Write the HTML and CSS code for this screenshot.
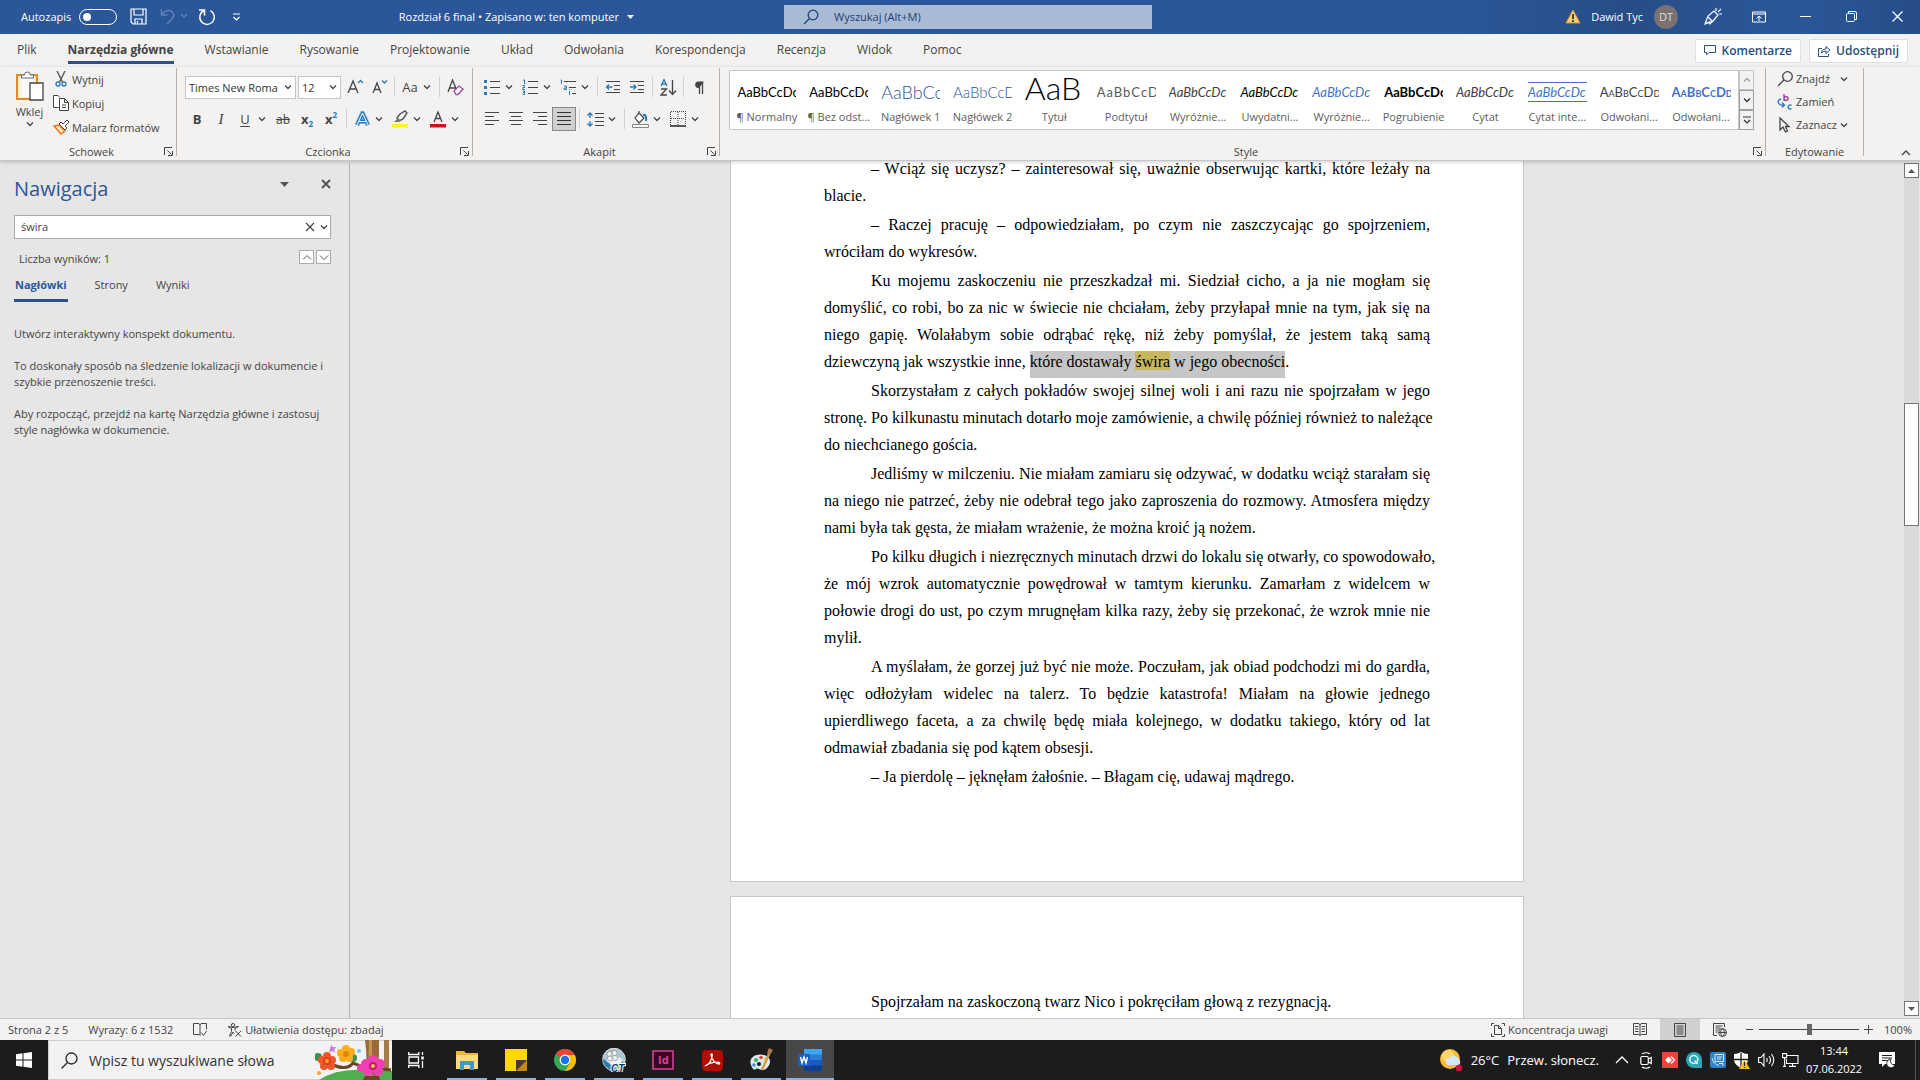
FILE: index.html
```html
<!DOCTYPE html>
<html lang="pl">
<head>
<meta charset="UTF-8">
<meta name="viewport" content="width=device-width, initial-scale=1.0">
<title>Rozdział 6 final</title>
<link rel="stylesheet" href="styles.css">
</head>
<body>
    <svg class="sprite" aria-hidden="true">
        <symbol id="chev" viewBox="0 0 8 8"><path d="M1 2.5l3 3 3-3" fill="none" stroke="currentColor" stroke-width="1.3"/></symbol>
        <symbol id="launch" viewBox="0 0 9 9"><path d="M.5 8V.5H8M3.500 3.500l4 4M8.500 4v4.500H4" fill="none" stroke="#444" stroke-width="1"/></symbol>
    </svg>

    <header class="titlebar">
        <div class="title-left">
            <label class="autosave">Autozapis <input type="checkbox" class="toggle"></label>
            <button class="tb-btn save" aria-label="Zapisz"><svg width="17" height="17" viewBox="0 0 17 17" fill="none" stroke="#fff" stroke-width="1.200"><path d="M1 1h15v15H3l-2-2zM4 1v6h9V1M5 16v-5h7v5M7.500 16v-3"/></svg></button>
            <button class="tb-btn undo" aria-label="Cofnij"><svg width="27" height="17" viewBox="0 0 27 17" fill="none" stroke="#5f82b8" stroke-width="1.500"><path d="M1.500 1v6h6M1.500 7C5 2 11 1 13 5s-1 6-6 11M21 6l3 3 3-3"/></svg></button>
            <button class="tb-btn redo" aria-label="Powtórz"><svg width="18" height="18" viewBox="0 0 18 18" fill="none" stroke="#fff" stroke-width="1.500"><path d="M1 2h5.500v5.500M6 2.500a7.300 7.300 0 1 0 6.500.2"/></svg></button>
            <button class="tb-btn" aria-label="Dostosuj"><svg width="9" height="8" viewBox="0 0 9 8" fill="none" stroke="#fff" stroke-width="1.200"><path d="M1 1h7M1.500 4l3 3 3-3"/></svg></button>
            <button class="doc-title">Rozdział 6 final • Zapisano w: ten komputer <svg width="7" height="4" viewBox="0 0 7 4"><path d="M0 0h7L3.500 4z" fill="#fff"/></svg></button>
        </div>
        <label class="title-search">
            <svg width="16" height="16" viewBox="0 0 16 16" fill="none" stroke="#1e3f73" stroke-width="1.300"><circle cx="10" cy="6" r="4.800"/><path d="M6.500 9.500L1 15"/></svg>
            <input type="text" placeholder="Wyszukaj (Alt+M)" aria-label="Wyszukaj">
        </label>
        <div class="title-right">
            <svg width="16" height="15" viewBox="0 0 16 15"><path d="M8 1l7 13H1z" fill="#fbd07a" stroke="#e08a2c"/><path d="M8 5v5M8 11v2" stroke="#222" stroke-width="1.600"/></svg>
            <span class="user">Dawid Tyc</span>
            <span class="avatar">DT</span>
            <button class="win-btn pen" aria-label="Pióro"><svg width="18" height="18" viewBox="0 0 18 18" fill="none" stroke="#fff" stroke-width="1.200"><path d="M1 16l3-8 6-5 4 4-5 6zM1 16l4-2 1 2 3-3M4 9l4 4M12 3V0M14 4l3-3M15 6h3"/></svg></button>
            <button class="win-btn" aria-label="Opcje wstążki"><svg width="14" height="12" viewBox="0 0 14 12" fill="none" stroke="#fff"><path d="M.5 1h13v10H.5zM.5 3h13M7 10V5M4.500 7.500L7 5l2.500 2.500"/></svg></button>
            <button class="win-btn" aria-label="Minimalizuj"><svg width="11" height="11" viewBox="0 0 11 11"><path d="M0 5.500h11" stroke="#fff"/></svg></button>
            <button class="win-btn" aria-label="Przywróć"><svg width="11" height="11" viewBox="0 0 11 11" fill="none" stroke="#fff"><rect x=".5" y="2.500" width="8" height="8" rx="1"/><path d="M2.500 2V.5H9q1.500 0 1.500 1.500v6.500H9"/></svg></button>
            <button class="win-btn" aria-label="Zamknij"><svg width="11" height="11" viewBox="0 0 11 11"><path d="M.5.5l10 10M10.500.5l-10 10" stroke="#fff" stroke-width="1.200"/></svg></button>
        </div>
    </header>

    <nav class="tabs">
        <button class="tab">Plik</button>
        <button class="tab active">Narzędzia główne</button>
        <button class="tab">Wstawianie</button>
        <button class="tab">Rysowanie</button>
        <button class="tab">Projektowanie</button>
        <button class="tab">Układ</button>
        <button class="tab">Odwołania</button>
        <button class="tab">Korespondencja</button>
        <button class="tab">Recenzja</button>
        <button class="tab">Widok</button>
        <button class="tab">Pomoc</button>
        <div class="tab-actions">
            <button class="share"><svg width="12" height="11" viewBox="0 0 12 11" fill="none" stroke="#2b4f7c"><path d="M.5.5h11v7H5L2.500 10V7.500h-2z"/></svg>Komentarze</button>
            <button class="share"><svg width="13" height="12" viewBox="0 0 13 12" fill="none" stroke="#2b4f7c"><path d="M4 3.500H.5v8h10V9M3.500 8q0-4 4.500-4V1.500l4 3.500-4 3.500V6Q5 6 3.500 8z"/></svg>Udostępnij</button>
        </div>
    </nav>

    <section class="ribbon">
        <div class="group clipboard">
            <div class="group-body paste-row">
                <button class="paste">
                    <svg width="29" height="32" viewBox="0 0 29 32" fill="none"><path d="M2 4h20v24H2z" fill="#fdf0d8" stroke="#e08a2c" stroke-width="2"/><path d="M6 6h13v20H6z" fill="#faf9f8"/><path d="M6.500 7V4h3q0-3 3-3t3 3h3v3z" fill="#fff" stroke="#666"/><path d="M15 12h13v17H15z" fill="#fff" stroke="#444" stroke-width="1.300"/></svg>
                    <span>Wklej</span>
                    <svg class="chev"><use href="#chev"/></svg>
                </button>
                <div class="stack clip-stack">
                    <button class="cmd"><svg width="16" height="16" viewBox="0 0 16 16" fill="none"><path d="M4 0l5.500 11M12 0L6.500 11" stroke="#555" stroke-width="1.400"/><circle cx="5" cy="13" r="2" stroke="#2a7ab8" stroke-width="1.300"/><circle cx="11" cy="13" r="2" stroke="#2a7ab8" stroke-width="1.300"/></svg>Wytnij</button>
                    <button class="cmd"><svg width="16" height="16" viewBox="0 0 16 16" fill="#fff" stroke="#444"><path d="M5.500 12.500h-5V.5H5l2 2"/><path d="M6.500 3.500h5l4 4v8h-9zM11.500 3.500v4h4M9 10h4M9 12.500h4"/></svg>Kopiuj</button>
                    <button class="cmd"><svg width="16" height="16" viewBox="0 0 16 16" fill="none"><path d="M1 7l5-1 6 6-4 3z" fill="#fbe3c2" stroke="#e07b1f" stroke-width="1.500"/><path d="M6 5l2-2 2 2 4-4 2 2-4 4 2 2-2 2z" fill="#fff" stroke="#444"/></svg>Malarz formatów</button>
                </div>
            </div>
            <div class="group-foot"><span>Schowek</span><button class="launch" aria-label="Schowek – opcje"><svg width="9" height="9"><use href="#launch"/></svg></button></div>
        </div>

        <div class="group font">
            <div class="group-body rows">
                <div class="row">
                    <span class="combo font-name"><select aria-label="Czcionka"><option>Times New Roma</option></select><svg class="chev"><use href="#chev"/></svg></span>
                    <span class="combo font-size"><select aria-label="Rozmiar"><option>12</option></select><svg class="chev"><use href="#chev"/></svg></span>
                    <button class="ic" aria-label="Większa czcionka"><svg width="17" height="16" viewBox="0 0 17 16" fill="none" stroke="#444" stroke-width="1.300"><path d="M1 14L6 2l5 12M3 10h6"/><path d="M11 4l2.500-2.500L16 4" stroke="#2a7ab8"/></svg></button>
                    <button class="ic" aria-label="Mniejsza czcionka"><svg width="17" height="16" viewBox="0 0 17 16" fill="none" stroke="#444" stroke-width="1.300"><path d="M2 14L6 4l4 10M3.500 10.500h5"/><path d="M11 1.500L13.500 4 16 1.500" stroke="#2a7ab8"/></svg></button>
                    <i class="sep"></i>
                    <button class="ic case" aria-label="Wielkość liter">Aa</button><button class="dd" aria-label="Więcej"><svg class="chev"><use href="#chev"/></svg></button>
                    <i class="sep"></i>
                    <button class="ic" aria-label="Wyczyść formatowanie"><svg width="17" height="17" viewBox="0 0 17 17" fill="none" stroke="#444" stroke-width="1.300"><path d="M1 13L5.500 1 10 12M2.500 9h6"/><path d="M7 12l5-5 4 3-5 5.500H9z" fill="#fff" stroke="#9b45a5"/></svg></button>
                </div>
                <div class="row">
                    <button class="ic bold" aria-label="Pogrubienie">B</button>
                    <button class="ic italic" aria-label="Kursywa">I</button>
                    <button class="ic underline" aria-label="Podkreślenie">U</button><button class="dd" aria-label="Więcej"><svg class="chev"><use href="#chev"/></svg></button>
                    <button class="ic strike" aria-label="Przekreślenie">ab</button>
                    <button class="ic script" aria-label="Indeks dolny">x<sub>2</sub></button>
                    <button class="ic script" aria-label="Indeks górny">x<sup>2</sup></button>
                    <i class="sep"></i>
                    <button class="ic" aria-label="Efekty tekstu"><svg width="17" height="16" viewBox="0 0 17 16" fill="none" stroke-linejoin="round"><path d="M3 14L8.500 2 14 14M5 10.500h7" stroke="#8fc3ea" stroke-width="5"/><path d="M3 14L8.500 2 14 14M5 10.500h7" stroke="#2a7ab8" stroke-width="3.400"/><path d="M3 14L8.500 2 14 14M5 10.500h7" stroke="#fff" stroke-width="1"/></svg></button><button class="dd" aria-label="Więcej"><svg class="chev"><use href="#chev"/></svg></button>
                    <button class="ic" aria-label="Wyróżnienie"><svg width="18" height="18" viewBox="0 0 18 18" fill="none"><path d="M1 14h16v3.500H1z" fill="#fbf22c"/><path d="M6 8l3-4 5-3 2 2-4 6-4 2z" stroke="#555" stroke-width="1.400"/><path d="M3 12l4-4 3 3-3 1z" fill="#777"/></svg></button><button class="dd" aria-label="Więcej"><svg class="chev"><use href="#chev"/></svg></button>
                    <button class="ic" aria-label="Kolor czcionki"><svg width="18" height="18" viewBox="0 0 18 18" fill="none"><path d="M1 14h16v3.500H1z" fill="#c8141c"/><path d="M5 12L9 2l4 10M6.500 8.500h5" stroke="#444" stroke-width="1.300"/></svg></button><button class="dd" aria-label="Więcej"><svg class="chev"><use href="#chev"/></svg></button>
                </div>
            </div>
            <div class="group-foot"><span>Czcionka</span><button class="launch" aria-label="Czcionka – opcje"><svg width="9" height="9"><use href="#launch"/></svg></button></div>
        </div>

        <div class="group para">
            <div class="group-body rows">
                <div class="row">
                    <button class="ic" aria-label="Punktory"><svg width="16" height="16" viewBox="0 0 16 16"><path d="M0 1h3v3H0zM0 7h3v3H0zM0 13h3v3H0z" fill="#2a7ab8"/><path d="M6 2.500h10M6 8.500h10M6 14.500h10" stroke="#444"/></svg></button><button class="dd" aria-label="Więcej"><svg class="chev"><use href="#chev"/></svg></button>
                    <button class="ic" aria-label="Numerowanie"><svg width="16" height="16" viewBox="0 0 16 16" fill="none"><path d="M1 1h1.500v4M.5 6.500h2v2H.8v2h2M.5 12h2v3.500h-2M1 13.500h1.500" stroke="#2a7ab8"/><path d="M6 2.500h10M6 8.500h10M6 14.500h10" stroke="#444"/></svg></button><button class="dd" aria-label="Więcej"><svg class="chev"><use href="#chev"/></svg></button>
                    <button class="ic" aria-label="Lista wielopoziomowa"><svg width="16" height="16" viewBox="0 0 16 16" fill="none"><path d="M.5 1h1v4M4 7h2.500v3.500H4V9h2M9.500 12v4M9.500 10v1" stroke="#2a7ab8"/><path d="M4 2.500h12M9 8.500h7M12 14.500h4" stroke="#444"/></svg></button><button class="dd" aria-label="Więcej"><svg class="chev"><use href="#chev"/></svg></button>
                    <i class="sep"></i>
                    <button class="ic" aria-label="Zmniejsz wcięcie"><svg width="16" height="14" viewBox="0 0 16 14" fill="none"><path d="M1 1.500h14M9 5.500h6M9 9.500h6M1 12.500h14" stroke="#444"/><path d="M7.500 7h-6M4 4.500L1.500 7 4 9.500" stroke="#2a7ab8" stroke-width="1.300"/></svg></button>
                    <button class="ic" aria-label="Zwiększ wcięcie"><svg width="16" height="14" viewBox="0 0 16 14" fill="none"><path d="M1 1.500h14M9 5.500h6M9 9.500h6M1 12.500h14" stroke="#444"/><path d="M1 7h6M4.500 4.500L7 7 4.500 9.500" stroke="#2a7ab8" stroke-width="1.300"/></svg></button>
                    <i class="sep"></i>
                    <button class="ic" aria-label="Sortuj"><svg width="17" height="17" viewBox="0 0 17 17" fill="none" stroke-width="1.300"><path d="M1 7l3-6.500L7 7M2 5h4" stroke="#2a7ab8"/><path d="M1 10h5.500L1 16h6M12.500 1v14M9 11.500l3.500 4 3.500-4" stroke="#444"/></svg></button>
                    <i class="sep"></i>
                    <button class="ic" aria-label="Znaki formatowania"><svg width="10" height="13" viewBox="0 0 10 13"><path d="M10 .5H4.500a3.300 3.300 0 0 0 0 6.600H5" fill="#444"/><path d="M5.500 1v12M8.500 1v12" stroke="#444" stroke-width="1.300"/></svg></button>
                </div>
                <div class="row">
                    <button class="ic" aria-label="Do lewej"><svg width="14" height="14" viewBox="0 0 14 14"><path d="M0 .5h14M0 4.500h9M0 8.500h14M0 12.500h9" stroke="#444"/></svg></button>
                    <button class="ic" aria-label="Do środka"><svg width="14" height="14" viewBox="0 0 14 14"><path d="M0 .5h14M2 4.500h10M0 8.500h14M2 12.500h10" stroke="#444"/></svg></button>
                    <button class="ic" aria-label="Do prawej"><svg width="14" height="14" viewBox="0 0 14 14"><path d="M0 .5h14M5 4.500h9M0 8.500h14M5 12.500h9" stroke="#444"/></svg></button>
                    <button class="ic on" aria-label="Wyjustuj"><svg width="14" height="14" viewBox="0 0 14 14"><path d="M0 .5h14M0 4.500h14M0 8.500h14M0 12.500h14" stroke="#333"/></svg></button>
                    <i class="sep"></i>
                    <button class="ic" aria-label="Interlinia"><svg width="17" height="15" viewBox="0 0 17 15" fill="none"><path d="M8 1.500h9M8 5.500h9M8 9.500h9M8 13.500h9" stroke="#444"/><path d="M3 1v5M3 14V9M.5 3.500L3 1l2.500 2.500M.5 11.500L3 14l2.500-2.500" stroke="#2a7ab8" stroke-width="1.300"/></svg></button><button class="dd" aria-label="Więcej"><svg class="chev"><use href="#chev"/></svg></button>
                    <i class="sep"></i>
                    <button class="ic" aria-label="Cieniowanie"><svg width="17" height="17" viewBox="0 0 17 17" fill="none"><path d="M.5 13.500h16v3H.5z" fill="#fff" stroke="#888"/><path d="M7 2l5 5-5 5-4-5zM7 2V0" fill="#fff" stroke="#444" stroke-width="1.200"/><path d="M11 4q4-1 3 6" stroke="#2a7ab8" stroke-width="2"/></svg></button><button class="dd" aria-label="Więcej"><svg class="chev"><use href="#chev"/></svg></button>
                    <button class="ic" aria-label="Obramowanie"><svg width="16" height="16" viewBox="0 0 16 16" fill="none" stroke="#444"><path d="M.5 14V.5h15V14M8 1v14M1 7.500h14" stroke-dasharray="1 1"/><path d="M0 15h16" stroke="#222" stroke-width="1.500"/></svg></button><button class="dd" aria-label="Więcej"><svg class="chev"><use href="#chev"/></svg></button>
                </div>
            </div>
            <div class="group-foot"><span>Akapit</span><button class="launch" aria-label="Akapit – opcje"><svg width="9" height="9"><use href="#launch"/></svg></button></div>
        </div>

        <div class="group style-group">
            <div class="group-body gallery-wrap">
                <div class="gallery">
                    <button class="style"><span class="preview">AaBbCcDc</span><span>¶ Normalny</span></button>
                    <button class="style"><span class="preview">AaBbCcDc</span><span>¶ Bez odst...</span></button>
                    <button class="style"><span class="preview h1">AaBbCc</span><span>Nagłówek 1</span></button>
                    <button class="style"><span class="preview h2">AaBbCcD</span><span>Nagłówek 2</span></button>
                    <button class="style"><span class="preview big">AaB</span><span>Tytuł</span></button>
                    <button class="style"><span class="preview sub">AaBbCcD</span><span>Podtytuł</span></button>
                    <button class="style"><span class="preview em grey">AaBbCcDc</span><span>Wyróżnie...</span></button>
                    <button class="style"><span class="preview em">AaBbCcDc</span><span>Uwydatni...</span></button>
                    <button class="style"><span class="preview em blue">AaBbCcDc</span><span>Wyróżnie...</span></button>
                    <button class="style"><span class="preview strong">AaBbCcDc</span><span>Pogrubienie</span></button>
                    <button class="style"><span class="preview em grey">AaBbCcDc</span><span>Cytat</span></button>
                    <button class="style"><span class="preview em blue lined">AaBbCcDc</span><span>Cytat inte...</span></button>
                    <button class="style"><span class="preview caps">AaBbCcDd</span><span>Odwołani...</span></button>
                    <button class="style"><span class="preview caps blue strong">AaBbCcDd</span><span>Odwołani...</span></button>
                </div>
                <div class="gallery-scroll">
                    <button disabled aria-label="W górę"><svg class="chev up"><use href="#chev"/></svg></button>
                    <button aria-label="W dół"><svg class="chev"><use href="#chev"/></svg></button>
                    <button aria-label="Więcej stylów"><svg width="8" height="8" viewBox="0 0 8 8" fill="none" stroke="#333" stroke-width="1.200"><path d="M0 1h8M1 4l3 3 3-3"/></svg></button>
                </div>
            </div>
            <div class="group-foot"><span>Style</span><button class="launch" aria-label="Style – opcje"><svg width="9" height="9"><use href="#launch"/></svg></button></div>
        </div>

        <div class="group edit">
            <div class="group-body stack edit-stack">
                <button class="cmd"><svg width="16" height="16" viewBox="0 0 16 16" fill="none" stroke="#444" stroke-width="1.300"><circle cx="10.500" cy="5.500" r="4.800"/><path d="M7 9l-6 6"/></svg><span>Znajdź</span><svg class="chev"><use href="#chev"/></svg></button>
                <button class="cmd"><svg width="16" height="16" viewBox="0 0 16 16" fill="none" stroke-width="1.400"><path d="M7 0v7M7 4.500a2 2 0 1 1 4 0a2 2 0 1 1-4 0" stroke="#9b45a5"/><path d="M4 5Q0 6 1.500 9T7 11M5 8.500L7.500 11 5 13.500M14.500 11.500a2 2 0 1 0 0 3" stroke="#2a7ab8"/></svg><span>Zamień</span></button>
                <button class="cmd"><svg width="16" height="16" viewBox="0 0 16 16" fill="none" stroke="#444" stroke-width="1.300"><path d="M3 1v12l3-3 2.500 5 2-1L8.500 9.500H12z"/></svg><span>Zaznacz</span><svg class="chev"><use href="#chev"/></svg></button>
            </div>
            <div class="group-foot"><span>Edytowanie</span></div>
        </div>
        <button class="collapse" aria-label="Zwiń wstążkę"><svg width="10" height="6" viewBox="0 0 10 6"><path d="M1 5l4-4 4 4" fill="none" stroke="#444" stroke-width="1.300"/></svg></button>
    </section>

    <div class="workspace">
        <aside class="nav-pane">
            <div class="nav-head">
                <h1>Nawigacja</h1>
                <button aria-label="Opcje okienka"><svg width="9" height="5" viewBox="0 0 9 5"><path d="M0 0h9L4.500 5z" fill="#555"/></svg></button>
                <button aria-label="Zamknij okienko"><svg width="10" height="10" viewBox="0 0 10 10"><path d="M1 1l8 8M9 1L1 9" stroke="#555" stroke-width="2"/></svg></button>
            </div>
            <div class="nav-search">
                <input type="text" value="świra" aria-label="Wyszukaj w dokumencie">
                <button aria-label="Wyczyść"><svg width="10" height="10" viewBox="0 0 10 10"><path d="M1 1l8 8M9 1L1 9" stroke="#444" stroke-width="1.200"/></svg></button>
                <button aria-label="Opcje wyszukiwania"><svg class="chev"><use href="#chev"/></svg></button>
            </div>
            <div class="results">
                <span>Liczba wyników: 1</span>
                <button aria-label="Poprzedni"><svg width="10" height="7" viewBox="0 0 10 7"><path d="M1 5.500l4-4 4 4" fill="none" stroke="#555"/></svg></button>
                <button aria-label="Następny"><svg width="10" height="7" viewBox="0 0 10 7"><path d="M1 1.500l4 4 4-4" fill="none" stroke="#555"/></svg></button>
            </div>
            <div class="nav-tabs">
                <button class="active">Nagłówki</button>
                <button>Strony</button>
                <button>Wyniki</button>
            </div>
            <div class="nav-help">
                <p>Utwórz interaktywny konspekt dokumentu.</p>
                <p>To doskonały sposób na śledzenie lokalizacji w dokumencie i<br>szybkie przenoszenie treści.</p>
                <p>Aby rozpocząć, przejdź na kartę Narzędzia główne i zastosuj<br>style nagłówka w dokumencie.</p>
            </div>
        </aside>

        <main class="canvas">
            <article class="page first">
                <p>– Wciąż się uczysz? – zainteresował się, uważnie obserwując kartki, które leżały na blacie.</p>
                <p>– Raczej pracuję – odpowiedziałam, po czym nie zaszczycając go spojrzeniem, wróciłam do wykresów.</p>
                <p>Ku mojemu zaskoczeniu nie przeszkadzał mi. Siedział cicho, a ja nie mogłam się domyślić, co robi, bo za nic w świecie nie chciałam, żeby przyłapał mnie na tym, jak się na niego gapię. Wolałabym sobie odrąbać rękę, niż żeby pomyślał, że jestem taką samą dziewczyną jak wszystkie inne, <span class="selected">które dostawały <mark>świra</mark> w jego obecności</span>.</p>
                <p>Skorzystałam z całych pokładów swojej silnej woli i ani razu nie spojrzałam w jego <span class="keep">stronę. Po kilkunastu minutach dotarło moje zamówienie, a chwilę później również to należące</span> do niechcianego gościa.</p>
                <p>Jedliśmy w milczeniu. Nie miałam zamiaru się odzywać, w dodatku wciąż starałam się na niego nie patrzeć, żeby nie odebrał tego jako zaproszenia do rozmowy. Atmosfera między nami była tak gęsta, że miałam wrażenie, że można kroić ją nożem.</p>
                <p><span class="keep">Po kilku długich i niezręcznych minutach drzwi do lokalu się otwarły, co spowodowało,</span> że mój wzrok automatycznie powędrował w tamtym kierunku. Zamarłam z widelcem w połowie drogi do ust, po czym mrugnęłam kilka razy, żeby się przekonać, że wzrok mnie nie mylił.</p>
                <p>A myślałam, że gorzej już być nie może. Poczułam, jak obiad podchodzi mi do gardła, więc odłożyłam widelec na talerz. To będzie katastrofa! Miałam na głowie jednego upierdliwego faceta, a za chwilę będę miała kolejnego, w dodatku takiego, który od lat odmawiał zbadania się pod kątem obsesji.</p>
                <p>– Ja pierdolę – jęknęłam żałośnie. – Błagam cię, udawaj mądrego.</p>
            </article>
            <article class="page">
                <p>Spojrzałam na zaskoczoną twarz Nico i pokręciłam głową z rezygnacją.</p>
            </article>
        </main>

        <div class="scrollbar">
            <button aria-label="Przewiń w górę"><svg width="7" height="4" viewBox="0 0 7 4"><path d="M0 4h7L3.500 0z" fill="#555"/></svg></button>
            <div class="track"><div class="thumb"></div></div>
            <button aria-label="Przewiń w dół"><svg width="7" height="4" viewBox="0 0 7 4"><path d="M0 0h7L3.500 4z" fill="#555"/></svg></button>
        </div>
    </div>

    <footer class="status">
        <span>Strona 2 z 5</span>
        <span>Wyrazy: 6 z 1532</span>
        <svg width="14" height="14" viewBox="0 0 14 14" fill="none" stroke="#444"><path d="M7 12.500V2L6 .5H.5v11H6L7 12.500M7 2L8 .5h5.500v6M8 9.500l2.500 3 3-4.500"/></svg>
        <button class="a11y"><svg width="15" height="14" viewBox="0 0 15 14" fill="none" stroke="#444"><circle cx="6" cy="2.200" r="1.700"/><path d="M1 3.500l3.500 2v3L2.500 13H4l2-4 1.500 1.500M11.500 3.500L8 5.500v2M8.500 8l5.500 5.500M14 8l-5.500 5.500M1 3.500q5 2 10.500 0"/></svg>Ułatwienia dostępu: zbadaj</button>
        <div class="status-right">
            <button class="focus"><svg width="14" height="14" viewBox="0 0 14 14" fill="none" stroke="#444"><path d="M3 .5H.5V3M11 .5h2.500V3M3 13.500H.5V11M11 13.500h2.500V11M3.500 2.500h4l3 3v6h-7zM7.500 2.500v3h3"/></svg>Koncentracja uwagi</button>
            <button class="view" aria-label="Tryb odczytu"><svg width="14" height="13" viewBox="0 0 14 13" fill="none" stroke="#444"><path d="M7 1v11.500M.5.5H6L7 2 8 .5h5.500v11H8L7 12.500 6 11.500H.5zM2 3.500h3.500M2 6h3.500M2 8.500h3.500M8.500 3.500H12M8.500 6H12M8.500 8.500H12"/></svg></button>
            <button class="view on" aria-label="Układ wydruku"><svg width="12" height="14" viewBox="0 0 12 14" fill="none" stroke="#444"><path d="M.5.5h11v13H.5zM2.500 3h7M2.500 5h7M2.500 7h7M2.500 9h7M2.500 11h7"/></svg></button>
            <button class="view" aria-label="Układ sieci Web"><svg width="14" height="14" viewBox="0 0 14 14" fill="none" stroke="#444"><path d="M4 12.500H.5V.5h11V4M2.500 3h7M2.500 5h5M2.500 7h3M2.500 9h2"/><circle cx="9.500" cy="9.500" r="4" fill="#f3f2f1"/><path d="M5.500 9.500h8M9.500 5.500q-4 4 0 8q4-4 0-8"/></svg></button>
            <button class="zoom-btn" aria-label="Pomniejsz"><svg width="9" height="9" viewBox="0 0 9 9"><path d="M1 4.500h7" stroke="#444"/></svg></button>
            <input type="range" class="zoom" min="0" max="100" value="51" aria-label="Powiększenie">
            <button class="zoom-btn" aria-label="Powiększ"><svg width="9" height="9" viewBox="0 0 9 9"><path d="M0 4.500h9M4.500 0v9" stroke="#444"/></svg></button>
            <span class="percent">100%</span>
        </div>
    </footer>

    <footer class="taskbar">
        <button class="start" aria-label="Start"><svg width="16" height="16" viewBox="0 0 16 16" fill="#fff"><path d="M0 2.300L6.500 1.300V7.500H0zM7.500 1.200L16 0v7.500H7.500zM0 8.500h6.500v6.200L0 13.700zM7.500 8.500H16V16l-8.500-1.200z"/></svg></button>
        <label class="task-search">
            <svg width="17" height="17" viewBox="0 0 17 17" fill="none" stroke="#222" stroke-width="1.300"><circle cx="10.500" cy="6.500" r="5.500"/><path d="M6.500 10.500L.5 16.500"/></svg>
            <input type="text" placeholder="Wpisz tu wyszukiwane słowa" aria-label="Wyszukiwanie">
            <svg class="blossom" width="77" height="40" viewBox="0 0 77 40">
                <path d="M4 40q18-12 46-10l27 1v9z" fill="#4fae4f"/>
                <path d="M50 0h14v14l-1 26H50q3-20 0-40z" fill="#9a6a38"/><path d="M54 0h3v40h-4z" fill="#c49556"/><path d="M69 0h5v31h-5z" fill="#a97a45"/>
                <path d="M18 25q14 6 20-2l10 4 28 3" fill="none" stroke="#6a4426" stroke-width="3"/>
                <circle cx="3" cy="17" r="4" fill="#3f8f52"/><circle cx="38" cy="18" r="4" fill="#3f8f52"/>
                <g fill="#f0562a"><circle cx="12" cy="16" r="4"/><circle cx="7" cy="20" r="4"/><circle cx="17" cy="20" r="4"/><circle cx="9" cy="26" r="4"/><circle cx="16" cy="26" r="4"/></g><circle cx="12" cy="21" r="4" fill="#e03e1a"/><circle cx="12" cy="21" r="2" fill="#ffb02e"/>
                <g fill="#f9ae1e"><circle cx="31" cy="9" r="4"/><circle cx="26" cy="13" r="4"/><circle cx="36" cy="12" r="4"/><circle cx="28" cy="18" r="4"/><circle cx="34" cy="18" r="4"/></g><circle cx="31" cy="14" r="3" fill="#e98408"/>
                <g fill="#f03fb4"><circle cx="58" cy="20" r="5"/><circle cx="51" cy="24" r="5"/><circle cx="65" cy="24" r="5"/><circle cx="46" cy="28" r="4"/><circle cx="53" cy="31" r="5"/><circle cx="63" cy="31" r="5"/></g><circle cx="58" cy="26" r="4" fill="#c4187c"/><circle cx="58" cy="26" r="2" fill="#ffc53a"/>
                <path d="M16 5l2 2 3 0-2 3 1 3-3-2-3 1 1-3z" fill="#c97be8"/><circle cx="44" cy="11" r="2" fill="#6fcbe0"/><circle cx="4" cy="33" r="2" fill="#f5a623"/>
                <path d="M48 40l2-4h14l1 4z" fill="#6a4426"/>
            </svg>
        </label>
        <button class="app taskview" aria-label="Widok zadań"><svg width="16" height="16" viewBox="0 0 16 16" fill="none" stroke="#fff" stroke-width="1.300"><path d="M0 2.500h11.500M0 13.500h11.500M.7 0v2.500M10.800 0v2.500M.7 16v-2.500M10.800 16v-2.500M1 5h9.500v6H1zM14.500 0v3M14.500 9v7"/><path d="M13.200 4.500h2.600v3h-2.600z" fill="#fff" stroke="none"/></svg></button>
        <button class="app" aria-label="Eksplorator plików"><svg width="22" height="19" viewBox="0 0 22 19"><path d="M0 0h8l2 2h12v16H0z" fill="#eeb63c"/><path d="M0 4h22v14H0z" fill="#fddb7e"/><path d="M4 10h14v9h-4v-5H8v5H4z" fill="#3f97d6"/></svg></button>
        <button class="app" aria-label="Karteczki"><svg width="22" height="22" viewBox="0 0 22 22"><path d="M0 0h22v22H0z" fill="#ffd80c"/><path d="M11 11h11v11H11z" fill="#c48a10"/><path d="M11 22V11h11z" fill="#4a3b28"/></svg></button>
        <button class="app" aria-label="Chrome"><svg width="22" height="22" viewBox="0 0 22 22"><circle cx="11" cy="11" r="11" fill="#34a853"/><path d="M11 11L1.500 5.500A11 11 0 0 1 20.500 5.500z" fill="#ea4335"/><path d="M11 6h9.800A11 11 0 0 1 11 22l5-8z" fill="#fbbc05"/><circle cx="11" cy="11" r="5.400" fill="#fff"/><circle cx="11" cy="11" r="4.200" fill="#1a73e8"/></svg></button>
        <button class="app" aria-label="CT"><svg width="24" height="24" viewBox="0 0 24 24"><circle cx="12" cy="11.500" r="11" fill="#a9c6d3"/><circle cx="12" cy="11.500" r="11.300" fill="none" stroke="#e6eef2"/><path d="M1 11q0 9 9 11l-3-8z" fill="#2b7fa5"/><path d="M12 6l9 6-6 8-11-7z" fill="#e9f1f4"/><path d="M4 14l9 6 8-7-2 5-6 4z" fill="#2b7fa5"/><g fill="#f2f2f2" stroke="#8a8a8a" stroke-width=".7"><circle cx="7.500" cy="6" r="2.600"/><circle cx="12.500" cy="5" r="2.600"/><circle cx="8" cy="10.500" r="2.600"/><circle cx="13" cy="10" r="2.600"/></g><text x="9" y="24" font-family="Liberation Sans" font-size="10" font-weight="700" font-style="italic" fill="#1b2b7a" stroke="#fff" stroke-width="2" paint-order="stroke">CT</text></svg></button>
        <button class="app" aria-label="InDesign"><svg width="22" height="20" viewBox="0 0 22 20"><path d="M1 1h20v18H1z" fill="#3b0620" stroke="#e0409a" stroke-width="1.500"/><text x="6" y="14" font-family="Open Sans" font-size="11" font-weight="700" fill="#e0409a">Id</text></svg></button>
        <button class="app" aria-label="Acrobat"><svg width="21" height="21" viewBox="0 0 21 21"><rect width="21" height="21" rx="4" fill="#b30b00"/><path d="M4 15.500c2 0 6-5 6.300-10.500.1-1.500-1.300-1.500-1.200 0C9.500 10 14 14 17 14c1.500-.3.500-2-2-1.800-4 .1-8 1-11 3.300z" fill="none" stroke="#fff" stroke-width="1.300"/></svg></button>
        <button class="app" aria-label="Paint"><svg width="24" height="24" viewBox="0 0 24 24"><path d="M2 17C-1 9 8 5 15 7s8 8 3 13-9-1-11 1-4-1-5-4z" fill="#dbe8f0"/><circle cx="7" cy="12" r="2" fill="#3fae5a"/><circle cx="12" cy="9.500" r="1.800" fill="#d94b3b"/><circle cx="5" cy="17" r="1.800" fill="#4a8fd6"/><circle cx="10" cy="16" r="2" fill="#1c1c1c"/><circle cx="17" cy="11" r="1.800" fill="#f0c030"/><path d="M13 22l7-16" stroke="#d99a45" stroke-width="2.400"/><path d="M18 5l2-5 4 2-3 5z" fill="#a8794e"/></svg></button>
        <button class="app current" aria-label="Word"><svg width="24" height="22" viewBox="0 0 24 22"><path d="M6 0h18v6H6z" fill="#41a5ee"/><path d="M6 5.500h18V11H6z" fill="#2b7cd3"/><path d="M6 11h18v5.500H6z" fill="#185abd"/><path d="M6 16.500h18V22H6z" fill="#103f91"/><path d="M0 5h12v12H0z" fill="#1b5cbe"/><path d="M2.500 8l1.500 6 2-6 2 6 1.500-6" fill="none" stroke="#fff" stroke-width="1.400"/></svg></button>

        <div class="tray">
            <button class="weather"><svg width="23" height="23" viewBox="0 0 23 23"><circle cx="10" cy="10" r="10" fill="#f9bd38"/><circle cx="8" cy="7" r="6" fill="#fcd86c"/><path d="M9 16a3.500 3.500 0 0 1 .5-7 5 5 0 0 1 9 1.500 3 3 0 0 1 0 5.500z" fill="#d3e8f5"/><circle cx="19" cy="19" r="3.200" fill="#d1123f"/></svg><span>26°C</span><span>Przew. słonecz.</span></button>
            <button class="tray-ic" aria-label="Ukryte ikony"><svg width="14" height="8" viewBox="0 0 14 8"><path d="M1 7l6-6 6 6" fill="none" stroke="#fff" stroke-width="1.300"/></svg></button>
            <button class="tray-ic" aria-label="Spotkanie"><svg width="12" height="17" viewBox="0 0 12 17" fill="none" stroke="#fff" stroke-width="1.200"><rect x=".8" y="4.500" width="7.500" height="8" rx="1.500"/><path d="M8.500 7l2.700-1.500v6L8.500 10M2 2q4-2.500 8 0M2 15q4 2.500 8 0"/></svg></button>
            <button class="tray-ic" aria-label="AnyDesk"><svg width="16" height="16" viewBox="0 0 16 16"><path d="M0 0h16v16H0z" fill="#ef443b"/><path d="M3 8l3.500-3.500L10 8l-3.500 3.500z" fill="#fff"/><path d="M9 4.500L12.500 8 9 11.500" fill="none" stroke="#fff" stroke-width="1.300"/></svg></button>
            <button class="tray-ic" aria-label="Q"><svg width="16" height="16" viewBox="0 0 16 16"><path d="M8 0a8 8 0 0 1 8 8v8H8A8 8 0 0 1 8 0z" fill="#2ba5b3"/><circle cx="7.800" cy="7.500" r="4" fill="none" stroke="#e8fbff" stroke-width="1.500"/><path d="M8.500 8.500l3 3.500" stroke="#e8fbff" stroke-width="1.500"/></svg></button>
            <button class="tray-ic" aria-label="Grafika"><svg width="16" height="16" viewBox="0 0 16 16" fill="none"><rect width="16" height="16" rx="2" fill="#2d83c8"/><path d="M5 2.500h8.500v7H5zM7 5h5M7 7h4M2 6q1 6 7 7.500M9 11.500h4V14" stroke="#d5ecff"/></svg></button>
            <button class="tray-ic" aria-label="Zabezpieczenia"><svg width="16" height="17" viewBox="0 0 16 17"><path d="M7 0q3 2 7 2v5q0 6-7 9Q0 13 0 7V2q4 0 7-2z" fill="#fff"/><path d="M7 1v15M0 7.500h14" stroke="#1c1c1c" stroke-width="1.300"/><path d="M10.500 7.500L16 17H5z" fill="#f7b924"/><path d="M10.500 10v4M10.500 15v1" stroke="#222"/></svg></button>
            <button class="tray-ic" aria-label="Głośność"><svg width="17" height="14" viewBox="0 0 17 14" fill="none" stroke="#fff" stroke-width="1.100"><path d="M.6 4.500H3l3-3.500v12L3 9.500H.6zM8.500 5q1.500 2 0 4M11 3q3 4 0 8M13.500 1q4.500 6 0 12"/></svg></button>
            <button class="tray-ic" aria-label="Sieć"><svg width="17" height="14" viewBox="0 0 17 14" fill="none" stroke="#fff" stroke-width="1.100"><path d="M5 2.500h11v8H4.500V6M10.500 10.500v3M7 13.400h7M.6.6h4v4h-4zM2.600 4.500v9M1 13.400h3"/></svg></button>
            <div class="clock"><span>13:44</span><span>07.06.2022</span></div>
            <button class="tray-ic notes" aria-label="Powiadomienia"><svg width="17" height="17" viewBox="0 0 17 17"><path d="M0 0h16v12H6l-3 3v-3H0z" fill="#fff"/><path d="M3 3.500h10M3 6h10M3 8.500h6" stroke="#1c1c1c"/><path d="M12 7a4.300 4.300 0 1 0 4 6 4 4 0 0 1-4-6z" fill="#fff" stroke="#1c1c1c" stroke-width=".8"/></svg></button>
            <i class="desktop-edge"></i>
        </div>
    </footer>
</body>
</html>
```
FILE: styles.css
```css
:root {
    --word-blue: #2b579a;
    --ribbon: #f3f2f1;
    --canvas: #e6e6e6;
    --text: #444444;
    --line: #c6c6c6;
    --taskbar: #1c1c1c;
}

* {
    box-sizing: border-box;
}

body {
    margin: 0;
    height: 100vh;
    display: flex;
    flex-direction: column;
    overflow: hidden;
    font-family: "Open Sans", "Noto Sans", sans-serif;
    font-size: 11px;
    color: var(--text);
    background-color: var(--canvas);
}

button,
input,
select {
    font: inherit;
    color: inherit;
    border: none;
    background: none;
    padding: 0;
    margin: 0;
    outline: none;
}

button {
    white-space: nowrap;
}

svg {
    flex: none;
    display: block;
}

.sprite {
    position: absolute;
    width: 0;
    height: 0;
}

.chev {
    width: 8px;
    height: 8px;
}

.up {
    transform: rotate(180deg);
}

/* Title bar */
.titlebar {
    flex: none;
    height: 34px;
    padding: 0 0 1px 16px;
    display: grid;
    grid-template-columns: 1fr 368px 1fr;
    align-items: center;
    color: #fff;
    background: linear-gradient(90deg, transparent 75%, #264d87 85%, #2b579a 93%, #264d87) var(--word-blue);
}

.title-left,
.title-right {
    display: flex;
    align-items: center;
    height: 32px;
}

.autosave {
    display: flex;
    align-items: center;
    gap: 8px;
    padding-left: 5px;
    margin-right: 13px;
}

.toggle {
    appearance: none;
    width: 38px;
    height: 16px;
    border: 1px solid #fff;
    border-radius: 8px;
    padding: 3px;
}

.toggle::before {
    content: "";
    display: block;
    width: 8px;
    height: 8px;
    border-radius: 50%;
    background-color: #fff;
}

.tb-btn {
    margin-right: 13px;
}

.redo {
    margin: 0 16px 0 -2px;
}

.doc-title {
    display: flex;
    align-items: center;
    gap: 8px;
    margin-left: auto;
    margin-right: 150px;
}

.title-search {
    display: flex;
    align-items: center;
    height: 24px;
    padding-left: 19px;
    gap: 15px;
    background-color: #a9bad5;
    color: #1e3f73;
}

.title-search input {
    flex: 1;
}

::placeholder {
    color: inherit;
    opacity: 1;
}

.title-right {
    justify-content: flex-end;
}

.user {
    margin: 0 11px 0 10px;
}

.avatar {
    width: 24px;
    height: 24px;
    border-radius: 50%;
    line-height: 24px;
    text-align: center;
    color: #e0dcda;
    background-color: #7a7270;
}

.win-btn {
    width: 46px;
    height: 32px;
    display: flex;
    align-items: center;
    justify-content: center;
}

.pen {
    margin-left: 12px;
}

/* Ribbon tabs */
.tabs {
    flex: none;
    height: 33px;
    display: flex;
    align-items: center;
    gap: 31px;
    padding-left: 17px;
    font-size: 12px;
    background-color: var(--ribbon);
}

.tab {
    height: 26px;
    border-bottom: 3px solid transparent;
}

.tab.active {
    font-weight: 700;
    border-bottom-color: #2f4f8c;
}

.tab-actions {
    margin-left: auto;
    margin-right: 12px;
    display: flex;
    gap: 8px;
}

.share {
    display: flex;
    align-items: center;
    gap: 5px;
    height: 24px;
    padding: 0 8px;
    border: 1px solid #e1dfdd;
    border-radius: 2px;
    background-color: #fff;
    font-weight: 600;
    color: #2b4f7c;
}

/* Ribbon */
.ribbon {
    flex: none;
    position: relative;
    z-index: 1;
    height: 94px;
    padding-top: 1px;
    display: flex;
    border-bottom: 1px solid var(--line);
    box-shadow: 0 1px 4px rgba(0, 0, 0, 0.2);
    background-color: var(--ribbon);
}

.group {
    height: 88px;
    display: flex;
    flex-direction: column;
    border-right: 1px solid #b3b0ad;
}

.clipboard {
    width: 177px;
}

.font {
    width: 296px;
}

.para {
    width: 247px;
}

.style-group {
    flex: 1;
    min-width: 0;
}

.edit {
    width: 98px;
}

.group-body {
    flex: 1;
    min-height: 0;
}

.group-foot {
    flex: none;
    display: flex;
    align-items: center;
    height: 12px;
    padding: 0 3px 0 19px;
    margin-bottom: -1px;
}

.group-foot span {
    flex: 1;
    text-align: center;
}

.launch {
    width: 9px;
}

.edit .group-foot {
    padding: 0;
}

.paste-row {
    display: flex;
    gap: 8px;
    padding-left: 14px;
}

.paste {
    display: flex;
    flex-direction: column;
    align-items: center;
    align-self: flex-start;
    width: 31px;
    padding-top: 3px;
    gap: 1px;
}

.stack {
    display: flex;
    flex-direction: column;
    align-items: flex-start;
}

.cmd {
    display: flex;
    align-items: center;
    gap: 3px;
    height: 23px;
}

.clip-stack .cmd {
    height: 24px;
}

.edit-stack {
    padding-left: 11px;
    align-items: stretch;
}

.clip-stack,
.edit-stack {
    margin-top: -1px;
}

.edit-stack .cmd {
    text-align: left;
}

.edit-stack span {
    width: 41px;
}

.rows {
    display: flex;
    flex-direction: column;
    gap: 8px;
    padding: 7px 0 0 7px;
}

.font .rows {
    padding-left: 8px;
}

.row {
    display: flex;
    align-items: center;
    height: 24px;
}

.combo {
    display: flex;
    align-items: center;
    height: 23px;
    padding: 0 3px;
    margin-right: 2px;
    border: 1px solid var(--line);
    background-color: #fff;
}

.combo select {
    appearance: none;
    flex: 1;
    min-width: 0;
    color: #333;
}

.font-name {
    width: 111px;
}

.font-size {
    width: 43px;
}

.ic {
    flex: none;
    width: 24px;
    height: 24px;
    display: flex;
    align-items: center;
    justify-content: center;
}

.ic.on {
    border: 1px solid #8a8886;
    background-color: #d2d0ce;
}

.dd {
    width: 14px;
    padding-left: 1px;
}

.sep {
    width: 1px;
    height: 20px;
    margin: 0 3px;
    background-color: #d2d0ce;
}

.case {
    font-size: 13px;
}

.bold {
    font-size: 13px;
    font-weight: 700;
}

.italic {
    font-family: "Liberation Serif", serif;
    font-size: 15px;
    font-style: italic;
}

.underline {
    font-size: 13px;
    text-decoration: underline;
    text-underline-offset: 2px;
}

.strike {
    font-size: 12px;
    text-decoration: line-through;
}

.script {
    font-size: 13px;
    font-weight: 700;
}

.script sub,
.script sup {
    font-size: 8px;
    color: #2a7ab8;
}

.script sub {
    padding-top: 9px;
}

.script sup {
    padding-bottom: 9px;
}

.gallery-wrap {
    display: flex;
    align-items: flex-start;
    padding: 2px 11px 0 9px;
}

.gallery {
    flex: 1;
    min-width: 0;
    display: grid;
    grid-template-columns: repeat(14, 1fr);
    height: 60px;
    padding: 0 1px;
    border: 1px solid var(--line);
    background-color: #fff;
    overflow: hidden;
}

.style {
    min-width: 0;
    display: flex;
    flex-direction: column;
    align-items: center;
    color: #605e5c;
}

.preview {
    display: flex;
    align-items: flex-end;
    width: 59px;
    height: 23px;
    margin: 7px 0 8px;
    overflow: hidden;
    font-family: "Lato", sans-serif;
    font-size: 13px;
    line-height: 18px;
    color: #000;
}

.preview.h1 {
    font-size: 18px;
    font-weight: 300;
    color: #2f5496;
}

.preview.h2 {
    font-size: 15px;
    font-weight: 300;
    color: #2f5496;
}

.preview.big {
    font-size: 32px;
    font-weight: 300;
    line-height: 26px;
}

.preview.sub {
    letter-spacing: 1px;
    color: #5a5a5a;
}

.preview.em {
    font-style: italic;
}

.preview.grey,
.preview.caps {
    color: #404040;
}

.preview.strong {
    font-weight: 700;
}

.preview.blue {
    color: #4472c4;
}

.preview.lined {
    height: 20px;
    margin: 11px 0 7px;
    border-top: 1px solid #4472c4;
    border-bottom: 1px solid #4472c4;
}

.preview.caps {
    font-variant: small-caps;
}

.preview.caps.blue {
    color: #4472c4;
}

.gallery-scroll {
    width: 15px;
    height: 60px;
    display: flex;
    flex-direction: column;
}

.gallery-scroll button {
    flex: 1;
    display: flex;
    align-items: center;
    justify-content: center;
    border: 1px solid #a19f9d;
    color: #333;
}

.gallery-scroll button:disabled {
    border-color: var(--line);
    color: #a19f9d;
}

.collapse {
    width: 56px;
    padding: 0 9px 4px 0;
    display: flex;
    align-items: flex-end;
    justify-content: flex-end;
}

/* Workspace */
.workspace {
    flex: 1;
    min-height: 0;
    display: flex;
}

.nav-pane {
    width: 350px;
    padding: 0 18px 0 14px;
    margin-top: 2px;
    border-right: 1px solid #b3b3b3;
}

.nav-head {
    display: flex;
    align-items: center;
    height: 50px;
    gap: 32px;
}

.nav-head h1 {
    flex: 1;
    margin: 0;
    font-size: 20px;
    font-weight: 400;
    color: var(--word-blue);
}

.nav-head button {
    padding-bottom: 8px;
}

.nav-search {
    display: flex;
    align-items: center;
    gap: 5px;
    height: 24px;
    margin-top: 2px;
    padding: 0 2px 0 6px;
    border: 1px solid #ababab;
    background-color: #fff;
}

.nav-search input {
    flex: 1;
    min-width: 0;
    padding-bottom: 2px;
}

.results {
    display: flex;
    align-items: center;
    gap: 2px;
    height: 24px;
    margin-top: 7px;
    padding-left: 5px;
}

.results span {
    flex: 1;
}

.results button {
    width: 15px;
    height: 14px;
    display: flex;
    align-items: center;
    justify-content: center;
    margin-bottom: 2px;
    border: 1px solid #ababab;
    background-color: #fff;
}

.nav-tabs {
    display: flex;
    gap: 26px;
    margin-top: 5px;
}

.nav-tabs button {
    height: 27px;
    padding: 0 1px 6px;
    border-bottom: 3px solid transparent;
}

.nav-tabs .active {
    font-weight: 700;
    color: var(--word-blue);
    border-bottom-color: #2f4f8c;
}

.nav-help {
    margin-top: 24px;
    line-height: 16px;
    white-space: nowrap;
}

.nav-help p {
    margin: 0 0 16px;
}

.canvas {
    flex: 1;
    min-width: 0;
    overflow: hidden;
    display: flex;
    flex-direction: column;
    align-items: center;
}

.page {
    flex: none;
    width: 794px;
    height: 1123px;
    padding: 91px 93px 89px;
    border: 1px solid var(--line);
    background-color: #fff;
    font-family: "Liberation Serif", serif;
    font-size: 16px;
    line-height: 27px;
    color: #000;
}

/* scrolled past the top of the page */
.page.first {
    height: auto;
    margin: -7px 0 14px;
    padding-top: 0;
}

.page p {
    margin: 0 0 2px;
    text-align: justify;
    text-indent: 47px;
}

.keep {
    white-space: nowrap;
}

.selected {
    padding: 2px 0 8px;
    background-color: #c6c6c6;
}

.selected mark {
    padding-top: 2px;
    color: inherit;
    background-color: #c8b75c;
}

.scrollbar {
    width: 16px;
    padding: 2px 1px 2px 0;
    display: flex;
    flex-direction: column;
    background-color: var(--canvas);
}

.scrollbar button {
    height: 15px;
    display: flex;
    align-items: center;
    justify-content: center;
    border: 1px solid #777;
    background-color: #fff;
}

.track {
    flex: 1;
    background-color: #dadada;
}

.thumb {
    height: 123px;
    margin-top: 225px;
    border: 1px solid #777;
    background-color: #fff;
}

/* Status bar */
.status {
    flex: none;
    display: flex;
    align-items: center;
    gap: 20px;
    height: 22px;
    padding-left: 8px;
    border-top: 1px solid var(--line);
    background-color: var(--ribbon);
}

.status button {
    display: flex;
    align-items: center;
    justify-content: center;
    gap: 3px;
}

.status-right {
    margin-left: auto;
    height: 100%;
    padding-right: 8px;
    display: flex;
    align-items: center;
}

.focus {
    margin-right: 12px;
}

.view {
    width: 40px;
    height: 100%;
}

.view.on {
    background-color: #d2d0ce;
}

.zoom-btn {
    width: 19px;
}

.zoom {
    appearance: none;
    width: 100px;
    height: 11px;
    background: linear-gradient(#444, #444) center / 100% 1px no-repeat;
}

.zoom::-webkit-slider-thumb {
    appearance: none;
    width: 5px;
    height: 11px;
    background-color: #666;
}

.percent {
    width: 34px;
    text-align: right;
}

/* Taskbar */
.taskbar {
    flex: none;
    display: flex;
    height: 40px;
    background-color: var(--taskbar);
    color: #fff;
}

.start {
    width: 48px;
    display: flex;
    align-items: center;
    justify-content: center;
}

.task-search {
    width: 344px;
    display: flex;
    align-items: center;
    gap: 11px;
    padding-left: 12px;
    border: 1px solid #cfcfcf;
    border-right: none;
    background-color: #f2f2f2;
    color: #333;
    font-size: 14px;
}

.task-search input {
    flex: 1;
    min-width: 0;
}

.app {
    width: 48px;
    margin-right: 1px;
    display: flex;
    align-items: center;
    justify-content: center;
    background: linear-gradient(#76b9ed, #76b9ed) bottom / 40px 2px no-repeat;
}

.taskview {
    margin-right: 3px;
    background: none;
}

.current {
    background: linear-gradient(#76b9ed, #76b9ed) bottom / 100% 2px no-repeat #484848;
}

.tray {
    margin-left: auto;
    display: flex;
    align-items: center;
}

.weather {
    display: flex;
    align-items: center;
    gap: 8px;
    margin-right: 11px;
    font-size: 13px;
}

.tray-ic {
    width: 24px;
    height: 40px;
    display: flex;
    align-items: center;
    justify-content: center;
}

.clock {
    width: 64px;
    display: flex;
    flex-direction: column;
    align-items: center;
    line-height: 18px;
}

.notes {
    margin-left: 9px;
}

.desktop-edge {
    width: 5px;
    height: 40px;
    margin-left: 16px;
    border-left: 1px solid #555;
}
```
